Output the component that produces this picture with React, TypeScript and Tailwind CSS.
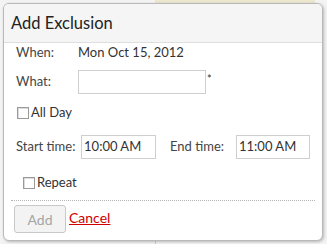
import React from 'react';

const Checkbox: React.FC<{ label: string }> = ({ label }) => (
    <label className="flex items-center gap-[2px]">
        <span className="w-[12px] h-[12px] border border-[#9a9a9a] bg-white shadow-[inset_1px_1px_0_#dcdcdc]" />
        <span>{label}</span>
    </label>
);

const App: React.FC = () => {
    return (
        <div className="w-[327px] h-[244px] bg-[#f3f3f3] relative overflow-hidden font-['Lato',sans-serif] text-[13px] text-[#333]">
            <div className="absolute left-[155px] top-0 w-[160px] h-[4px] bg-[#ece8cf]" />
            <div className="absolute left-[155px] bottom-0 w-[1px] h-[10px] bg-[#cfcfcf]" />
            <div className="absolute left-[3px] top-[3px] w-[320px] h-[238px] rounded-[6px] border border-[#b9b9b9] bg-white shadow-[1px_1px_3px_rgba(0,0,0,0.25)] flex flex-col overflow-hidden">
                <div className="h-[39px] bg-[#f5f5f5] border-b border-[#dedede] flex items-center px-[7px] text-[16.5px] text-[#222]">
                    Add Exclusion
                </div>
                <div className="px-[12px] pt-[2px]">
                    <div className="flex items-center h-[16px]">
                        <span className="w-[62px] text-[#444]">When:</span>
                        <span>Mon Oct 15, 2012</span>
                    </div>
                    <div className="flex items-center h-[24px] mt-[9px]">
                        <span className="w-[62px] text-[#444]">What:</span>
                        <span className="w-[128px] h-[24px] border border-[#cfcfcf] bg-white" />
                        <span className="ml-[1px] -mt-[6px] text-[11px]">*</span>
                    </div>
                    <div className="flex items-center h-[20px] mt-[9px] ml-[1px]">
                        <Checkbox label="All Day" />
                    </div>
                    <div className="flex items-center h-[24px] mt-[12px]">
                        <span className="w-[66px] text-[#444]">Start time:</span>
                        <span className="w-[76px] h-[24px] border border-[#cfcfcf] flex items-center pl-[2px]">10:00 AM</span>
                        <span className="ml-[14px] w-[67px] text-[#444]">End time:</span>
                        <span className="w-[75px] h-[24px] border border-[#cfcfcf] flex items-center pl-[2px]">11:00 AM</span>
                    </div>
                    <div className="flex items-center h-[20px] mt-[14px] ml-[7px]">
                        <Checkbox label="Repeat" />
                    </div>
                </div>
                <div className="mx-[7px] mt-[7px] border-t border-dotted border-[#b5b5b5]" />
                <div className="flex items-end px-[10px] pt-[4px] gap-[3px]">
                    <button className="w-[52px] h-[28px] rounded-[3px] border border-[#c8c8c8] bg-[#f3f3f3] text-[#a5a5a5] text-[14px]">
                        Add
                    </button>
                    <a href="#" className="text-[#d00000] underline text-[14px] mb-[5px]">Cancel</a>
                </div>
            </div>
        </div>
    );
};

export default App;
